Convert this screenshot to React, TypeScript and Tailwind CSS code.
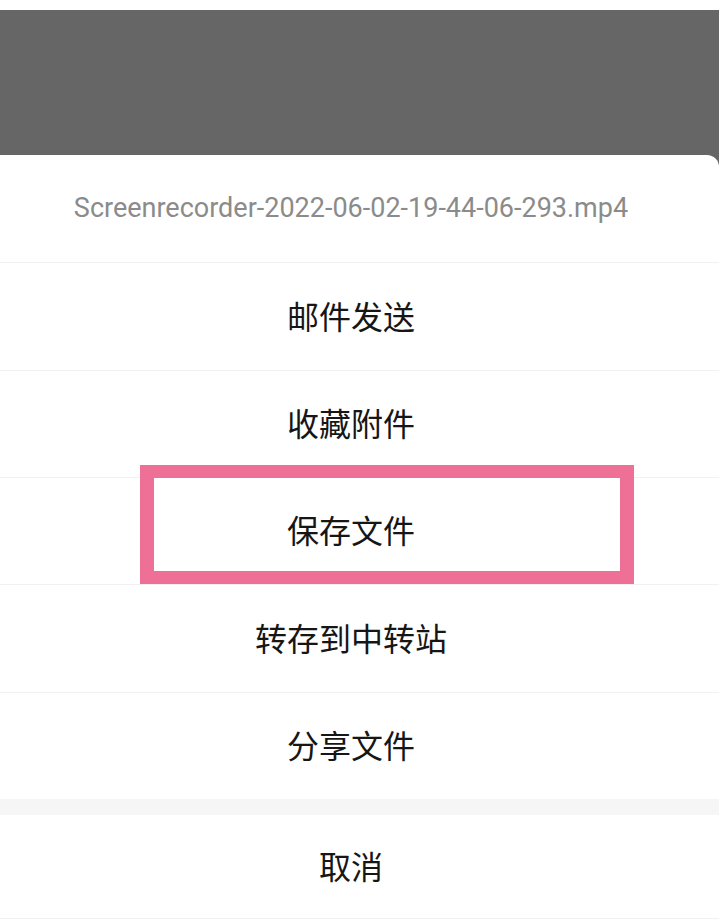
const actions = ["邮件发送", "收藏附件", "保存文件", "转存到中转站", "分享文件"];
const rowHeights = ["h-[108px]", "h-[107px]", "h-[107px]", "h-[108px]", "h-[107px]"];

const cjk = { fontFamily: '"Noto Sans CJK SC", "Noto Sans", sans-serif' };

export default function App() {
  return (
    <div className="relative flex h-[921px] w-[719px] flex-col overflow-hidden bg-white">
      <div className="h-[10px] shrink-0 bg-white" />
      <div className="h-[145px] shrink-0 bg-[#666666]" />

      <div className="flex flex-1 flex-col bg-[#666666]">
        <div className="flex flex-1 flex-col rounded-tr-[12px] bg-white">
          <div className="flex h-[107px] items-center justify-center pr-[17px]">
            <span
              className="text-[27px] text-[#8b8b8b]"
              style={{ fontFamily: 'Roboto, "Noto Sans", sans-serif' }}
            >
              Screenrecorder-2022-06-02-19-44-06-293.mp4
            </span>
          </div>

          {actions.map((label, i) => (
            <div
              key={label}
              className={`flex ${rowHeights[i]} items-center justify-center border-t border-[#f1f1f1] pr-[17px] pb-[4px]`}
            >
              <span className="text-[32px] text-[#161616]" style={cjk}>
                {label}
              </span>
            </div>
          ))}

          <div className="h-[16px] bg-[#f6f6f6]" />

          <div className="flex h-[104px] items-center justify-center border-b border-[#f1f1f1] pr-[17px] pb-[4px]">
            <span className="text-[32px] text-[#161616]" style={cjk}>
              取消
            </span>
          </div>
        </div>
      </div>

      {/* highlight annotation */}
      <div className="pointer-events-none absolute left-[140px] top-[465px] h-[119px] w-[494px] border-x-[14px] border-y-[13px] border-[#ef7096]" />
    </div>
  );
}
